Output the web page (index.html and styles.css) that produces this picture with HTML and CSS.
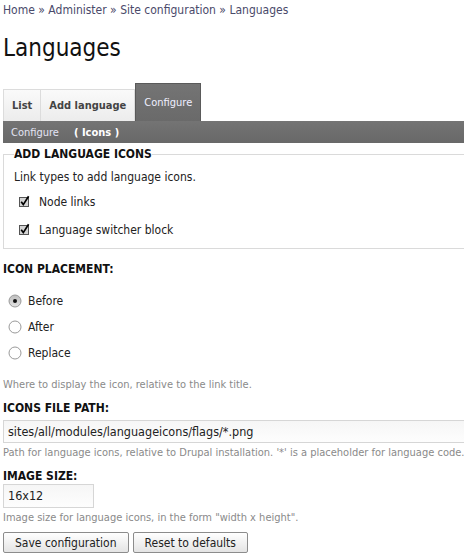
FILE: index.html
```html
<!DOCTYPE html>
<html>
<head>
<meta charset="utf-8">
<title>Languages</title>
<link rel="stylesheet" href="styles.css">
</head>
<body>
<div class="page">
  <div class="breadcrumb"><a class="crumb">Home</a> » <a class="crumb">Administer</a> » <a class="crumb">Site configuration</a> » <a class="crumb">Languages</a></div>
  <h1 class="title">Languages</h1>
  <ul class="tabs">
    <li class="tab">List</li>
    <li class="tab">Add language</li>
    <li class="tab tab-active">Configure</li>
  </ul>
  <div class="subtabs"><span class="subtab">Configure</span><span class="subtab subtab-active">( Icons )</span></div>

  <form class="form">
    <fieldset class="group">
      <legend class="group-legend">Add language icons</legend>
      <div class="group-text">Link types to add language icons.</div>
      <div class="check-row check-first">
        <svg class="check-icon" width="13" height="13" viewBox="0 0 13 13"><rect x="1.5" y="2.5" width="9" height="9" fill="#d4d4d4" stroke="#555"/><path d="M3.2 6.8 L5.3 9.6 L10.6 1.2" fill="none" stroke="#000" stroke-width="1.7"/></svg>
        <span class="check-label">Node links</span>
      </div>
      <div class="check-row">
        <svg class="check-icon" width="13" height="13" viewBox="0 0 13 13"><rect x="1.5" y="2.5" width="9" height="9" fill="#d4d4d4" stroke="#555"/><path d="M3.2 6.8 L5.3 9.6 L10.6 1.2" fill="none" stroke="#000" stroke-width="1.7"/></svg>
        <span class="check-label">Language switcher block</span>
      </div>
    </fieldset>

    <div class="field field-first">
      <div class="field-label">Icon placement:</div>
      <div class="radios">
        <div class="radio-row">
          <svg class="radio-icon" width="14" height="14" viewBox="0 0 14 14"><defs><linearGradient id="rg" x1="0" y1="0" x2="0" y2="1"><stop offset="0" stop-color="#bdbdbd"/><stop offset="1" stop-color="#e4e4e4"/></linearGradient></defs><circle cx="7" cy="7" r="6" fill="url(#rg)" stroke="#9a9a9a"/><circle cx="7" cy="7" r="2" fill="#111"/></svg>
          <span class="radio-label">Before</span>
        </div>
        <div class="radio-row">
          <svg class="radio-icon" width="14" height="14" viewBox="0 0 14 14"><circle cx="7" cy="7" r="6" fill="#fff" stroke="#9a9a9a"/></svg>
          <span class="radio-label">After</span>
        </div>
        <div class="radio-row">
          <svg class="radio-icon" width="14" height="14" viewBox="0 0 14 14"><circle cx="7" cy="7" r="6" fill="#fff" stroke="#9a9a9a"/></svg>
          <span class="radio-label">Replace</span>
        </div>
      </div>
      <div class="description description-radios">Where to display the icon, relative to the link title.</div>
    </div>

    <div class="field">
      <div class="field-label">Icons file path:</div>
      <div class="input input-wide">sites/all/modules/languageicons/flags/*.png</div>
      <div class="description">Path for language icons, relative to Drupal installation. '*' is a placeholder for language code.</div>
    </div>

    <div class="field">
      <div class="field-label">Image size:</div>
      <div class="input input-small">16x12</div>
      <div class="description">Image size for language icons, in the form "width x height".</div>
    </div>

    <div class="actions">
      <button type="button" class="button">Save configuration</button>
      <button type="button" class="button">Reset to defaults</button>
    </div>
  </form>
</div>
</body>
</html>
```

FILE: styles.css
```css
html, body {
  margin: 0;
  padding: 0;
  background: #fff;
  overflow: hidden;
}

.page {
  width: 540px;
  padding: 3px 0 0 3px;
  font-family: "DejaVu Sans Condensed", "DejaVu Sans", sans-serif;
  font-size: 12px;
  color: #222;
}

.breadcrumb {
  font-size: 12px;
  line-height: 15px;
  color: #4a4a6a;
}

.crumb {
  color: #4a4a6a;
  text-decoration: none;
}

.title {
  margin: 16px 0 0 0;
  font-size: 24px;
  line-height: 28px;
  font-weight: normal;
  color: #111;
}

.tabs {
  list-style: none;
  margin: 21px 0 0 0;
  padding: 0;
  display: flex;
  align-items: flex-end;
}

.tab {
  height: 32px;
  box-sizing: border-box;
  padding: 0 8px;
  display: flex;
  align-items: center;
  font-size: 11px;
  font-weight: bold;
  color: #444;
  background: linear-gradient(#fafafa, #ececec);
  border: 1px solid #dcdcdc;
  border-bottom: none;
  border-right: none;
}

.tab:nth-child(2) {
  border-right: 1px solid #dcdcdc;
}

.tab-active {
  height: 38px;
  font-weight: normal;
  color: #f0f0ff;
  background: linear-gradient(#747474, #6a6a6a);
  border: 1px solid #5a5a5a;
  border-bottom: none;
  padding: 0 8px;
}

.subtabs {
  height: 22px;
  display: flex;
  align-items: center;
  gap: 15px;
  padding-left: 8px;
  font-size: 11px;
  background: linear-gradient(#747474, #686868);
  color: #e4e4f4;
}

.subtab-active {
  font-weight: bold;
  color: #fff;
}

.form {
  margin: 0;
}

.group {
  margin: 5px 0 0 0;
  padding: 6px 10px 4px 10px;
  border: 1px solid #dadada;
  min-width: 0;
}

.group-legend {
  padding: 0;
  margin-left: 0;
  font-weight: bold;
  text-transform: uppercase;
  color: #111;
  font-size: 12px;
  line-height: 12px;
}

.group-text {
  line-height: 16px;
  margin-top: 3px;
}

.check-row {
  display: flex;
  align-items: center;
  gap: 8px;
  padding-left: 4px;
  height: 28px;
}

.check-first {
  margin-top: 3px;
}

.check-icon {
  display: block;
  margin-top: -2px;
}

.field {
  margin-top: 8px;
}

.field-first {
  margin-top: 12px;
}

.field-label {
  font-weight: bold;
  text-transform: uppercase;
  color: #111;
  line-height: 16px;
}

.radios {
  margin-top: 11px;
}

.radio-row {
  display: flex;
  align-items: center;
  gap: 6px;
  padding-left: 5px;
  height: 26px;
}

.radio-icon {
  display: block;
}

.description {
  font-size: 11px;
  line-height: 14px;
  color: #8a8a8a;
  margin-top: 3px;
}

.description-radios {
  margin-top: 12px;
}

.input {
  box-sizing: border-box;
  border: 1px solid #d6d6d6;
  background: linear-gradient(#f6f6f6, #fdfdfd);
  font-size: 12.5px;
  padding-left: 4px;
  color: #222;
}

.input-wide {
  width: 520px;
  height: 23px;
  line-height: 21px;
  margin-top: 4px;
}

.input-small {
  width: 91px;
  height: 24px;
  line-height: 22px;
  margin-top: 0;
}

.actions {
  display: flex;
  gap: 4px;
  margin-top: 7px;
}

.button {
  font-family: inherit;
  font-size: 12px;
  color: #222;
  height: 21px;
  padding: 0 11px;
  border: 1px solid #8c8c8c;
  border-radius: 2px;
  background: linear-gradient(#ffffff, #e4e4e4);
  margin: 0;
}
```
